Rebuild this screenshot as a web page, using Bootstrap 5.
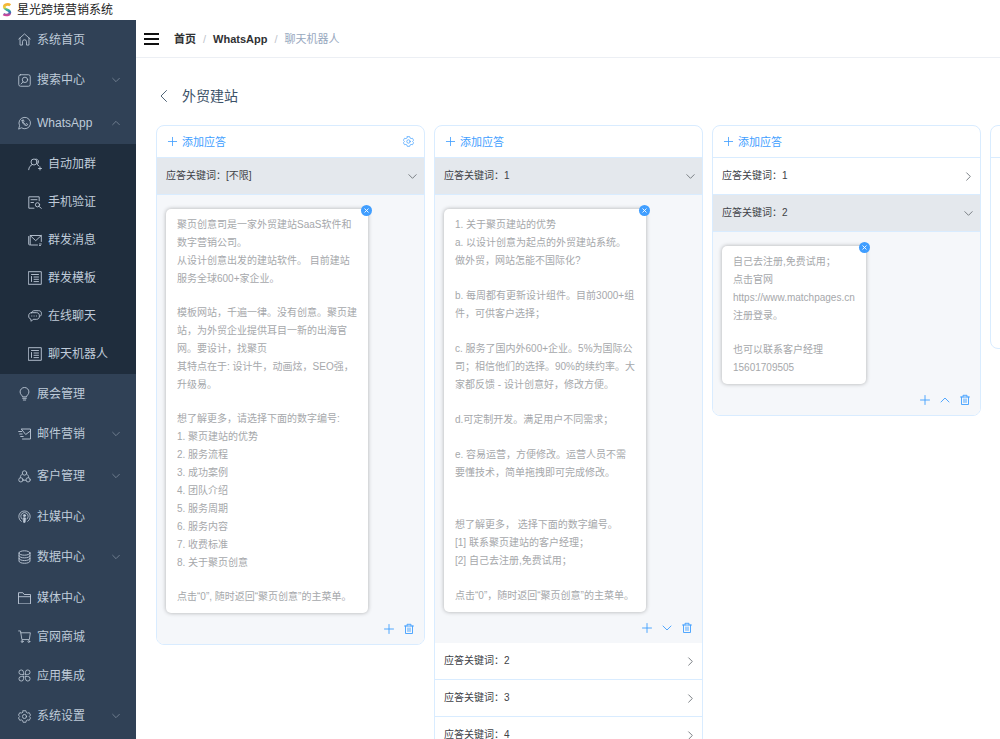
<!DOCTYPE html>
<html lang="zh-CN">
<head>
<meta charset="utf-8">
<meta name="viewport" content="width=device-width, initial-scale=1">
<title>星光跨境营销系统</title>
<link rel="stylesheet" href="https://cdn.jsdelivr.net/npm/bootstrap@5.3.0/dist/css/bootstrap.min.css">
<style>
body{font-family:"Liberation Sans","Noto Sans CJK SC",sans-serif;font-size:12px;line-height:18px;color:#303133;background:#fff}
a{color:inherit;text-decoration:none}
svg{display:block;flex:none;fill:none;stroke:currentColor;stroke-width:.9;stroke-linecap:round;stroke-linejoin:round}
.app-title{height:20px;color:#222;padding:0 2px;gap:5px}
.side{width:136px;background:#304156;color:#bfcbd9}
.side a{height:39px;padding:0 15px 0 18px;gap:6px;font-size:12px}
.side a.has-sub{height:42px}
.side a.is-open{height:43px}
.side .arrow{margin-left:auto;color:#8290a0}
.side .sub{background:#1f2d3d;padding:1px 0}
.side .sub a{height:38px;padding-left:28px;gap:6px}
.topbar{height:38px;border-bottom:1px solid #eceff4;padding:0 8px;gap:15px;font-size:11px}
.topbar .breadcrumb{--bs-breadcrumb-divider-color:#c0c4cc;--bs-breadcrumb-item-padding-x:7px;font-size:11px}
.topbar .breadcrumb-item.active{color:#97a8be}
.menu-bars{color:#111;stroke-width:2;stroke-linecap:butt}
.plain{border:0;background:none;padding:0;color:inherit}
.page-head{padding:28px 0 19px 4px;gap:12px;line-height:20px;color:#3d5268}
.page-head h1{font-size:14px;line-height:20px}
.board{padding:0 20px;gap:9px}
.flow-card{flex:0 0 269px;border:1px solid #d9ecff;border-radius:8px;overflow:hidden;background:#fff}
.flow-card.is-empty{height:224px}
.flow-top{height:32px;padding:0 10px;border-bottom:1px solid #d9ecff;color:#409eff;font-size:11px}
.flow-top .plain{gap:4px}
.key-row{height:37px;padding:0 6px 0 9px;border:0;border-bottom:1px solid #d9ecff;background:#fff;color:#404247;font-size:10px;width:100%}
.key-row svg{color:#70757b;stroke-width:1}
.key-row.is-active{background:#e4e8ed}
.key-body{background:#f5f7fa;padding:14px 9px 0}
.note{position:relative;width:202px;padding:7px 11px;background:#fff;border-radius:5px;box-shadow:0 0 4px rgba(0,0,0,.3);color:#a6a8ab;font-size:10px;line-height:18px;white-space:nowrap}
.note.is-fit{width:fit-content}
.note p{margin:0 0 16px}
.note.is-roomy p{margin-bottom:17px}
.note.is-roomy p.section-end{margin-bottom:34px}
.note p:last-of-type,.note.is-roomy p:last-of-type{margin-bottom:0}
.note-close{position:absolute;top:-4px;right:-4px;width:11px;height:11px;border:0;padding:0;border-radius:50%;background:#409eff;color:#fff}
.tools{height:31px;gap:8px;color:#409eff}
</style>
</head>
<body class="vh-100 overflow-hidden d-flex flex-column">
<svg class="d-none" aria-hidden="true">
<symbol id="i-down" viewBox="0 0 12 12"><path d="M2 4l4 4 4-4"/></symbol>
<symbol id="i-up" viewBox="0 0 12 12"><path d="M2 8l4-4 4 4"/></symbol>
<symbol id="i-right" viewBox="0 0 12 12"><path d="M4 2l4 4-4 4"/></symbol>
<symbol id="i-plus" viewBox="0 0 12 12"><path d="M6 1.500v9M1.500 6h9"/></symbol>
<symbol id="i-x" viewBox="0 0 11 11"><path d="M3.800 3.800l3.400 3.400M7.200 3.800L3.800 7.200"/></symbol>
<symbol id="i-trash" viewBox="0 0 12 12"><path d="M1.500 3h9M4 3V1.300h4V3M2.500 3v7.500h7V3M5 5v3.500M7 5v3.500"/></symbol>
<symbol id="i-gear" viewBox="0 0 14 14"><path d="M5.500.8L8.500.8 9 2.600 10.300 3.300 12.100 2.900 13.500 5.500 12.300 6.800 12.300 7.200 13.500 8.500 12.100 11.100 10.300 10.700 9 11.400 8.500 13.200 5.500 13.200 5 11.400 3.700 10.700 1.900 11.100.5 8.500 1.700 7.200 1.700 6.800.5 5.500 1.900 2.900 3.700 3.300 5 2.600z"/><circle cx="7" cy="7" r="2.200"/></symbol>
<symbol id="i-list" viewBox="0 0 14 14"><path d="M.7.7h12.600v12.600H.7zM3.500 3.500h7M3.500 5.500v5M6 6h4.500M6 8.300h4.500M6 10.600h4.500"/></symbol>
</svg>

<header class="app-title d-flex align-items-center flex-shrink-0">
<svg width="10" height="14" viewBox="0 0 9 14"><defs><linearGradient id="logo" x1="0" y1="0" x2="0" y2="1"><stop offset="0" stop-color="#f5b335"/><stop offset=".3" stop-color="#e8d03c"/><stop offset=".5" stop-color="#35b6a0"/><stop offset=".75" stop-color="#3f6fb5"/><stop offset="1" stop-color="#d0459a"/></linearGradient></defs><path d="M7.800 2.300C5.600.6 1.600 1.600 1.700 4.100c.1 2.700 5.700 2.600 5.700 5.300 0 2.700-4 3.300-6.500 1.800" stroke="url(#logo)" stroke-width="2.600" stroke-linecap="butt"/></svg>
<span>星光跨境营销系统</span>
</header>

<div class="d-flex flex-grow-1 overflow-hidden">
<nav class="side flex-shrink-0 overflow-hidden" aria-label="主菜单">
<a href="#" class="d-flex align-items-center"><svg width="13" height="13" viewBox="0 0 14 14"><path d="M.8 6.500L7 1l6.200 5.500M2.200 5.500V13h2.600V9.500a2.200 2.200 0 0 1 4.400 0V13h2.600V5.500"/></svg>系统首页</a>
<a href="#" class="has-sub d-flex align-items-center"><svg width="13" height="13" viewBox="0 0 14 14"><rect x=".8" y=".8" width="12.400" height="12.400" rx="2"/><circle cx="7.500" cy="6.300" r="2.900"/><path d="M5.300 8.600l-2 2.200"/></svg>搜索中心<svg class="arrow" width="10" height="10"><use href="#i-down"/></svg></a>
<a href="#" class="has-sub is-open d-flex align-items-center"><svg width="13" height="14" viewBox="0 0 14 14"><path d="M.8 13.200l.9-3.300A6.200 6.200 0 1 1 4 12.400z"/><path d="M4.500 4.200c-.6 2.500 2.400 5.700 5 5.500.8-.2 1-.9.900-1.300L8.900 7.600l-.9.900C7 8 6 7.100 5.700 6.100l.8-.9-.7-1.600c-.6-.2-1.100 0-1.300.6z"/></svg>WhatsApp<svg class="arrow" width="10" height="10"><use href="#i-up"/></svg></a>
<div class="sub">
<a href="#" class="d-flex align-items-center"><svg width="14" height="13" viewBox="0 0 14 13"><circle cx="6" cy="4" r="3"/><path d="M.7 11.700c.3-3 1.700-4.300 3.500-5M7.800 1.100c3-.3 3.800 3.800 1.200 5.200l2 1.700M12 9v3M10.500 10.500h3"/></svg>自动加群</a>
<a href="#" class="d-flex align-items-center"><svg width="14" height="13" viewBox="0 0 14 13"><path d="M6 12.200H.8V.8h10.400v4M3 3.700h6M3 6.500h2.500"/><circle cx="9.500" cy="8.800" r="2.100"/><path d="M11 10.400l2.300 1.900"/></svg>手机验证</a>
<a href="#" class="d-flex align-items-center"><svg width="14" height="12" viewBox="0 0 14 12"><path d="M9.500 11H2.200V1.500h11.100v6M2.200 1.500l5.500 5.200 5.600-5.200M.7 2.500v7.800q0 .7.700.7M11.500 10h1.800M11.500 11.500h1"/></svg>群发消息</a>
<a href="#" class="d-flex align-items-center"><svg width="14" height="14"><use href="#i-list"/></svg>群发模板</a>
<a href="#" class="d-flex align-items-center"><svg width="14" height="12" viewBox="0 0 14 12"><path d="M3.500 2.500C4.300.9 5.300.7 7 .7h3.500c2 0 2.900 1 2.900 2.600 0 1.700-.3 2.600-1.400 3"/><path d="M3.500 2.700h5c2 0 2.900 1.200 2.900 3.200 0 2.200-1 3.400-2.900 3.400H5.200l-2 2-.4-2.200C1.300 8.700.7 7.600.7 5.900c0-2 1-3.200 2.800-3.200zM3.700 6h.2M6 6h.2M8.300 6h.2"/></svg>在线聊天</a>
<a href="#" class="d-flex align-items-center"><svg width="14" height="14"><use href="#i-list"/></svg>聊天机器人</a>
</div>
<a href="#" class="d-flex align-items-center"><svg width="13" height="14" viewBox="0 0 13 14"><path d="M4.500 9.500C4.300 8.300 2.100 7.400 2.100 4.900a4.400 4.400 0 0 1 8.800 0c0 2.500-2.200 3.400-2.400 4.600zM4.700 11.300h3.600M5.300 13h2.400"/></svg>展会管理</a>
<a href="#" class="has-sub d-flex align-items-center"><svg width="13" height="12" viewBox="0 0 13 12"><path d="M3.500 1h9v10H4.500M.7 3.500h3M1.700 6h2.500M3.500 1.300l4.200 5.200L12.400 3M2.700 8.500h2.500"/></svg>邮件营销<svg class="arrow" width="10" height="10"><use href="#i-down"/></svg></a>
<a href="#" class="has-sub d-flex align-items-center"><svg width="13" height="13" viewBox="0 0 14 14"><circle cx="7" cy="3.200" r="2.400"/><circle cx="3.100" cy="10.600" r="2.300"/><circle cx="10.900" cy="10.600" r="2.300"/><path d="M4.500 4.500C3 5.500 2.500 6.500 2.500 8M9.500 4.500c1.500 1 2 2 2 3.500M5.500 11h3"/></svg>客户管理<svg class="arrow" width="10" height="10"><use href="#i-down"/></svg></a>
<a href="#" class="d-flex align-items-center"><svg width="13" height="13" viewBox="0 0 14 14"><path d="M3.500 12.300a6.200 6.200 0 1 1 7 0M4.300 9.700a4 4 0 1 1 5.400 0"/><circle cx="7" cy="6" r="1.200" fill="currentColor"/><path d="M6 8.500h2l-.4 4.800H6.400z" fill="currentColor"/></svg>社媒中心</a>
<a href="#" class="has-sub d-flex align-items-center"><svg width="13" height="14" viewBox="0 0 13 14"><ellipse cx="6.500" cy="3" rx="5.500" ry="2.200"/><path d="M1 3v8c0 3 11 3 11 0V3M1 5.700c0 3 11 3 11 0M1 8.400c0 3 11 3 11 0"/></svg>数据中心<svg class="arrow" width="10" height="10"><use href="#i-down"/></svg></a>
<a href="#" class="d-flex align-items-center"><svg width="13" height="12" viewBox="0 0 13 12"><path d="M.5 11.500V.7h4.300l1.400 1.800h6.300v9zM.5 4.700h12"/></svg>媒体中心</a>
<a href="#" class="d-flex align-items-center"><svg width="13" height="13" viewBox="0 0 14 14"><path d="M.7 1h2l1.500 9.300h8L13.300 3H3.100"/><circle cx="4.500" cy="12.400" r="1"/><circle cx="11.700" cy="12.400" r="1"/></svg>官网商城</a>
<a href="#" class="d-flex align-items-center"><svg width="13" height="13" viewBox="0 0 14 14"><path d="M6 6H3.500A2.500 2.500 0 1 1 6 3.500zM8 6V3.500A2.500 2.500 0 1 1 10.500 6zM6 8v2.500A2.500 2.500 0 1 1 3.500 8zM8 8h2.500A2.500 2.500 0 1 1 8 10.500z"/></svg>应用集成</a>
<a href="#" class="has-sub d-flex align-items-center"><svg width="13" height="13"><use href="#i-gear"/></svg>系统设置<svg class="arrow" width="10" height="10"><use href="#i-down"/></svg></a>
</nav>

<main class="flex-grow-1 overflow-hidden">
<div class="topbar d-flex align-items-center">
<button class="plain" type="button" aria-label="折叠菜单"><svg class="menu-bars" width="15" height="12" viewBox="0 0 15 12"><path d="M0 1h15M0 6h15M0 11h15"/></svg></button>
<ol class="breadcrumb mb-0">
<li class="breadcrumb-item"><a href="#" class="fw-bold">首页</a></li>
<li class="breadcrumb-item"><a href="#" class="fw-bold">WhatsApp</a></li>
<li class="breadcrumb-item active" aria-current="page">聊天机器人</li>
</ol>
</div>
<div class="page-head d-flex align-items-center ms-3">
<button class="plain" type="button" aria-label="返回"><svg width="14" height="14" viewBox="0 0 14 14"><path d="M10.500 1.500L5 7l5.500 5.500"/></svg></button>
<h1 class="mb-0 fw-normal">外贸建站</h1>
</div>

<div class="board d-flex align-items-start">
<section class="flow-card">
<div class="flow-top d-flex align-items-center justify-content-between"><button class="plain d-flex align-items-center" type="button"><svg width="11" height="11"><use href="#i-plus"/></svg>添加应答</button><button class="plain" type="button" aria-label="设置"><svg width="11" height="11"><use href="#i-gear"/></svg></button></div>
<button class="key-row is-active d-flex align-items-center justify-content-between" type="button"><span>应答关键词：[不限]</span><svg width="11" height="11"><use href="#i-down"/></svg></button>
<div class="key-body">
<div class="note"><button class="note-close" type="button" aria-label="删除"><svg width="11" height="11"><use href="#i-x"/></svg></button>
<p>聚页创意司是一家外贸建站SaaS软件和<br>数字营销公司。<br>从设计创意出发的建站软件。 目前建站<br>服务全球600+家企业。</p>
<p>模板网站，千遍一律。没有创意。聚页建<br>站，为外贸企业提供耳目一新的出海官<br>网。要设计，找聚页<br>其特点在于: 设计牛，动画炫，SEO强，<br>升级易。</p>
<p>想了解更多，请选择下面的数字编号:<br>1. 聚页建站的优势<br>2. 服务流程<br>3. 成功案例<br>4. 团队介绍<br>5. 服务周期<br>6. 服务内容<br>7. 收费标准<br>8. 关于聚页创意</p>
<p>点击“0”, 随时返回“聚页创意”的主菜单。</p>
</div>
<div class="tools d-flex align-items-center justify-content-end"><button class="plain" type="button" aria-label="添加"><svg width="12" height="12"><use href="#i-plus"/></svg></button><button class="plain" type="button" aria-label="删除应答"><svg width="12" height="12"><use href="#i-trash"/></svg></button></div>
</div>
</section>

<section class="flow-card">
<div class="flow-top d-flex align-items-center"><button class="plain d-flex align-items-center" type="button"><svg width="11" height="11"><use href="#i-plus"/></svg>添加应答</button></div>
<button class="key-row is-active d-flex align-items-center justify-content-between" type="button"><span>应答关键词：1</span><svg width="11" height="11"><use href="#i-down"/></svg></button>
<div class="key-body">
<div class="note is-roomy"><button class="note-close" type="button" aria-label="删除"><svg width="11" height="11"><use href="#i-x"/></svg></button>
<p>1. 关于聚页建站的优势<br>a. 以设计创意为起点的外贸建站系统。<br>做外贸，网站怎能不国际化?</p>
<p>b. 每周都有更新设计组件。目前3000+组<br>件，可供客户选择；</p>
<p>c. 服务了国内外600+企业。5%为国际公<br>司；相信他们的选择。90%的续约率。大<br>家都反馈 - 设计创意好，修改方便。</p>
<p>d.可定制开发。满足用户不同需求；</p>
<p class="section-end">e. 容易运营，方便修改。运营人员不需<br>要懂技术，简单拖拽即可完成修改。</p>
<p>想了解更多， 选择下面的数字编号。<br>[1] 联系聚页建站的客户经理；<br>[2] 自己去注册,免费试用；</p>
<p>点击“0”，随时返回“聚页创意”的主菜单。</p>
</div>
<div class="tools d-flex align-items-center justify-content-end"><button class="plain" type="button" aria-label="添加"><svg width="12" height="12"><use href="#i-plus"/></svg></button><button class="plain" type="button" aria-label="下移"><svg width="12" height="12"><use href="#i-down"/></svg></button><button class="plain" type="button" aria-label="删除应答"><svg width="12" height="12"><use href="#i-trash"/></svg></button></div>
</div>
<button class="key-row d-flex align-items-center justify-content-between" type="button"><span>应答关键词：2</span><svg width="11" height="11"><use href="#i-right"/></svg></button>
<button class="key-row d-flex align-items-center justify-content-between" type="button"><span>应答关键词：3</span><svg width="11" height="11"><use href="#i-right"/></svg></button>
<button class="key-row d-flex align-items-center justify-content-between" type="button"><span>应答关键词：4</span><svg width="11" height="11"><use href="#i-right"/></svg></button>
</section>

<section class="flow-card">
<div class="flow-top d-flex align-items-center"><button class="plain d-flex align-items-center" type="button"><svg width="11" height="11"><use href="#i-plus"/></svg>添加应答</button></div>
<button class="key-row d-flex align-items-center justify-content-between" type="button"><span>应答关键词：1</span><svg width="11" height="11"><use href="#i-right"/></svg></button>
<button class="key-row is-active d-flex align-items-center justify-content-between" type="button"><span>应答关键词：2</span><svg width="11" height="11"><use href="#i-down"/></svg></button>
<div class="key-body">
<div class="note is-fit"><button class="note-close" type="button" aria-label="删除"><svg width="11" height="11"><use href="#i-x"/></svg></button>
<p>自己去注册,免费试用；<br>点击官网<br>https://www.matchpages.cn<br>注册登录。</p>
<p>也可以联系客户经理<br>15601709505</p>
</div>
<div class="tools d-flex align-items-center justify-content-end"><button class="plain" type="button" aria-label="添加"><svg width="12" height="12"><use href="#i-plus"/></svg></button><button class="plain" type="button" aria-label="上移"><svg width="12" height="12"><use href="#i-up"/></svg></button><button class="plain" type="button" aria-label="删除应答"><svg width="12" height="12"><use href="#i-trash"/></svg></button></div>
</div>
</section>

<section class="flow-card is-empty"><div class="flow-top"></div></section>
</div>
</main>
</div>
<script src="https://cdn.jsdelivr.net/npm/bootstrap@5.3.0/dist/js/bootstrap.bundle.min.js"></script>
</body>
</html>
